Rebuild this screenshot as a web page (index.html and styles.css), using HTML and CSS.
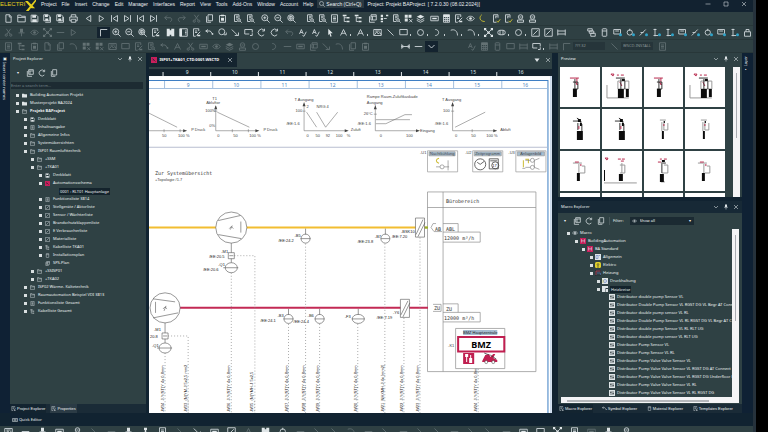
FILE: index.html
```html
<!DOCTYPE html>
<html lang="en">
<head>
  <meta charset="UTF-8" />
  <meta name="viewport" content="width=device-width, initial-scale=1.0" />
  <title>Projekt BAProject</title>
  <link rel="stylesheet" href="styles.css">
</head>
<body>

<!-- Icon set -->
<svg class="defs" aria-hidden="true">
  <symbol id="i-new" viewBox="0 0 12 12"><path d="M2.5 1h5l2 2.500v7.500h-7zM7 1v3h3"/></symbol>
  <symbol id="i-open" viewBox="0 0 12 12"><path d="M1 10.500v-9h4l1 1.500h5v7.500zM1 4.500h10"/></symbol>
  <symbol id="i-save" viewBox="0 0 12 12"><path d="M1.500 1.500h7l2 2v7h-9z"/><path class="f" d="M3 1.500h5v3.500h-5zM3 7h6v3.500h-6z"/></symbol>
  <symbol id="i-saveall" viewBox="0 0 12 12"><path d="M1 1h6l2 2v6h-8zM10 4v7h-7"/><path class="f" d="M2.500 1h4v3h-4zM3 6h4v3h-4z"/></symbol>
  <symbol id="i-print" viewBox="0 0 12 12"><path d="M3 4v-3h6v3M3 9h-2v-5h10v5h-2M3 7h6v4h-6z"/></symbol>
  <symbol id="i-prev" viewBox="0 0 12 12"><path d="M9 2v8l-6-4z"/></symbol>
  <symbol id="i-next" viewBox="0 0 12 12"><path d="M3 2v8l6-4z"/></symbol>
  <symbol id="i-first" viewBox="0 0 12 12"><path d="M2 1.500v9M10 2v8l-6-4z"/></symbol>
  <symbol id="i-last" viewBox="0 0 12 12"><path d="M10 1.500v9M2 2v8l6-4z"/></symbol>
  <symbol id="i-undo" viewBox="0 0 12 12"><path d="M4 2l-3 3 3 3M1 5h7c3 0 3 5 0 5"/></symbol>
  <symbol id="i-redo" viewBox="0 0 12 12"><path d="M8 2l3 3-3 3M11 5h-7c-3 0-3 5 0 5"/></symbol>
  <symbol id="i-cut" viewBox="0 0 12 12"><path d="M3 1l5 7M9 1l-5 7"/><circle cx="3" cy="9.500" r="1.500"/><circle cx="9" cy="9.500" r="1.500"/></symbol>
  <symbol id="i-copy" viewBox="0 0 12 12"><path d="M4 1h6v8h-6zM2 3v8h6"/></symbol>
  <symbol id="i-paste" viewBox="0 0 12 12"><path d="M2 2h8v9h-8z"/><path class="f" d="M4 1h4v2h-4zM4 5h4v4h-4z"/></symbol>
  <symbol id="i-sheet" viewBox="0 0 12 12"><path d="M8 5v-4h-6v9h4M4 3h3M4 5h3M4 7h1"/><circle cx="8" cy="8" r="1.800"/><path d="M9.500 9.500l2 2"/></symbol>
  <symbol id="i-zin" viewBox="0 0 12 12"><circle cx="5" cy="5" r="4"/><path d="M8 8l3.500 3.500M3 5h4M5 3v4"/></symbol>
  <symbol id="i-zout" viewBox="0 0 12 12"><circle cx="5" cy="5" r="4"/><path d="M8 8l3.500 3.500M3 5h4"/></symbol>
  <symbol id="i-zfit" viewBox="0 0 12 12"><circle cx="5" cy="5" r="4"/><path d="M8 8l3.500 3.500M3 3.500h4v3h-4zM5 2v6"/></symbol>
  <symbol id="i-list" viewBox="0 0 12 12"><path d="M2 1h8v10h-8zM4 4h4M4 6h4M4 8h4"/></symbol>
  <symbol id="i-tree" viewBox="0 0 12 12"><path d="M3 3v7h3M3 5h3"/><path class="f" d="M1 1h5v2h-5zM6 4h4v2h-4zM6 9h4v2h-4z"/></symbol>
  <symbol id="i-wins" viewBox="0 0 12 12"><path d="M4 1h7v7h-7zM2 3v8h7M4 3h7M6 3v5"/></symbol>
  <symbol id="i-struct" viewBox="0 0 12 12"><path class="f" d="M1 1h3v3h-3zM1 5h3v3h-3zM1 9h3v2h-3zM8 1h3v2h-3z"/><path d="M5 6h4"/></symbol>
  <symbol id="i-table" viewBox="0 0 12 12"><path class="f" d="M1 1h4v4h-4zM6 1h4v4h-4zM1 6h4v4h-4z"/><path d="M7 7l4 4M7 11l4-4"/></symbol>
  <symbol id="i-stack" viewBox="0 0 12 12"><path class="f" d="M6 1l5 2.500-5 2.500-5-2.500z"/><path d="M1 6l5 2.500 5-2.500M1 8.500l5 2.500 5-2.500"/></symbol>
  <symbol id="i-card" viewBox="0 0 12 12"><path d="M1 3h10v6h-10z"/><path class="f" d="M3 5h6v2h-6z"/></symbol>
  <symbol id="i-calc" viewBox="0 0 12 12"><path d="M2 1h8v10h-8zM2 6h8M2 8.500h8M5 4v7M7.500 4v7"/><path class="f" d="M2 1h8v3h-8z"/></symbol>
  <symbol id="i-edit" viewBox="0 0 12 12"><path d="M9 4v-3h-7v10h3M4 4h3M4 6h3M6 10l5-5"/><path class="f" d="M7 9h4v2h-4z"/></symbol>
  <symbol id="i-eye" viewBox="0 0 12 12"><path d="M1 6c2-4 8-4 10 0c-2 4-8 4-10 0z"/><circle class="f" cx="6" cy="6" r="1.800"/></symbol>
  <symbol id="i-moon" viewBox="0 0 12 12"><path class="y" d="M5 1c-4 3-3 9 4 9"/></symbol>
  <symbol id="i-sheety" viewBox="0 0 12 12"><path d="M8 5v-4h-6v10h4M4 3h3M4 5h2"/><path class="y" d="M6 9l2 2 3-4"/></symbol>
  <symbol id="i-badge" viewBox="0 0 12 12"><circle cx="6" cy="4" r="3"/><path d="M2 11h8v-3h-8zM4.500 4h3"/></symbol>
  <symbol id="i-corner" viewBox="0 0 12 12"><path d="M2 11v-9h9"/></symbol>
  <symbol id="i-win1" viewBox="0 0 12 12"><path class="f" fill-rule="evenodd" d="M1 1h10v10h-10zM5 1v2h2v-2zM5 9v2h2v-2z"/></symbol>
  <symbol id="i-win2" viewBox="0 0 12 12"><path d="M1 1h10v10h-10zM8 4h2M8 6h2M8 8h2"/><path class="f" d="M1 1h3v10h-3z"/></symbol>
  <symbol id="i-arc" viewBox="0 0 12 12"><path d="M1 3c5-2 9 1 9 7"/></symbol>
  <symbol id="i-conn" viewBox="0 0 12 12"><path d="M1 4h6l3 4M4 2l-3 2 3 2"/><path class="f" d="M9 7h2v2h-2z"/></symbol>
  <symbol id="i-circle" viewBox="0 0 12 12"><circle cx="6" cy="6" r="4"/></symbol>
  <symbol id="i-circlea" viewBox="0 0 12 12"><circle cx="5" cy="5" r="4"/><path d="M8 9h3v-3"/></symbol>
  <symbol id="i-line" viewBox="0 0 12 12"><path d="M2 2l8 8"/></symbol>
  <symbol id="i-linea" viewBox="0 0 12 12"><path d="M1 2l8 8M5 10h5v-4"/></symbol>
  <symbol id="i-recta" viewBox="0 0 12 12"><path d="M11 6v-4h-10v6h6M8 10h3v-3"/></symbol>
  <symbol id="i-rect" viewBox="0 0 12 12"><path d="M1 2h10v7h-10z"/></symbol>
  <symbol id="i-rot" viewBox="0 0 12 12"><path d="M9.500 3a4.500 4.500 0 1 0 0 6M10 1v3h-3"/></symbol>
  <symbol id="i-text" viewBox="0 0 12 12"><path d="M2 8l2.500-6 2.500 6M3 6h3M6 10l2 1 3-6"/></symbol>
  <symbol id="i-ptr" viewBox="0 0 12 12"><path class="f" d="M3 1l6 6h-3l1.500 4-1.500.500-1.500-4-1.500 2z"/></symbol>
  <symbol id="i-a" viewBox="0 0 12 12"><path d="M2 10l4-8 4 8M4 7h4"/></symbol>
  <symbol id="i-img" viewBox="0 0 12 12"><path d="M1 2h10v8h-10zM2 9l3-4 2 3 2-2 2 3M3 4h6"/></symbol>
  <symbol id="i-curve" viewBox="0 0 12 12"><path d="M3 2c6 0 6 8 0 8"/></symbol>
  <symbol id="i-node" viewBox="0 0 12 12"><path d="M2 2l8 8M10 2l-8 8"/><path class="f" d="M0 0h3v3h-3zM9 0h3v3h-3zM0 9h3v3h-3zM9 9h3v3h-3zM4.500 4.500h3v3h-3z"/></symbol>
  <symbol id="i-pipe" viewBox="0 0 12 12"><rect x="1" y="3" width="10" height="6" rx="3"/><path d="M4 3v6M8 3v6"/></symbol>
  <symbol id="i-chart" viewBox="0 0 12 12"><path d="M1 1h10v10h-10zM3 9l6-6"/></symbol>
  <symbol id="i-dim" viewBox="0 0 12 12"><path d="M1 2v8M11 2v8M1 4h10M1 8h10"/></symbol>
  <symbol id="i-phone" viewBox="0 0 12 12"><rect x="3" y="1" width="6" height="10" rx="1"/><path d="M3 4h6"/></symbol>
  <symbol id="i-lay" viewBox="0 0 12 12"><path d="M1 1h6v3h-6zM3 4h6v3h-6zM5 7h6v4h-6z"/></symbol>
  <symbol id="i-cardb" viewBox="0 0 12 12"><path d="M1 2h9v6h-9zM3 4h5"/><circle class="b" cx="10" cy="9" r="2"/></symbol>
  <symbol id="i-rotb" viewBox="0 0 12 12"><circle cx="5" cy="6" r="3.500"/><path d="M5 1v3"/><circle class="b" cx="10" cy="9" r="2"/></symbol>
  <symbol id="i-lineb" viewBox="0 0 12 12"><path d="M1 10l8-8M2 6h4"/><circle class="b" cx="10" cy="9" r="2"/></symbol>
  <symbol id="i-colb" viewBox="0 0 12 12"><path d="M4 1v10M2 2h4M2 10h6"/><circle class="b" cx="10" cy="9" r="2"/></symbol>
  <symbol id="i-lock" viewBox="0 0 12 12"><path d="M2 5h8v6h-8zM4 5v-3h4v3"/></symbol>
  <symbol id="i-dimh" viewBox="0 0 12 12"><path d="M1 6h10M1 3v6M11 3v6M3 4l-2 2 2 2M9 4l2 2-2 2"/></symbol>
  <symbol id="i-dash" viewBox="0 0 12 12"><path d="M1 6h10"/></symbol>
  <symbol id="i-chev" viewBox="0 0 12 12"><path d="M2 4l4 4 4-4"/></symbol>
  <symbol id="i-x" viewBox="0 0 12 12"><path d="M2 2l8 8M10 2l-8 8"/></symbol>
  <symbol id="i-pin" viewBox="0 0 12 12"><path class="f" d="M4 1h4v5h-4z"/><path d="M2 6.500h8M6 6v5"/></symbol>
  <symbol id="i-max" viewBox="0 0 12 12"><path d="M2 2h8v8h-8z"/></symbol>
  <symbol id="i-tri" viewBox="0 0 12 12"><path class="f" d="M1 3h10l-5 7z"/></symbol>
  <symbol id="i-search" viewBox="0 0 12 12"><circle cx="5" cy="5" r="4"/><path d="M8 8l3.500 3.500"/></symbol>
  <symbol id="i-fold" viewBox="0 0 12 12"><path class="f" d="M0 10.500v-9h5l1 1.500h6v7.500z"/></symbol>
  <symbol id="i-red" viewBox="0 0 12 12"><path class="r" d="M0 0h12v12h-12z"/><path class="k" d="M3 3l6 6M3 6h3"/></symbol>
  <symbol id="i-m" viewBox="0 0 12 12"><path class="r" d="M0 0h12v12h-12z"/><path d="M3 9v-6l3 4 3-4v6"/></symbol>
  <symbol id="i-blue" viewBox="0 0 12 12"><path class="f" d="M0 0h12v12h-12z"/><path class="bl" d="M2 3h4v6h-4zM7 3h3"/></symbol>
  <symbol id="i-el" viewBox="0 0 12 12"><rect class="yf" width="12" height="12" rx="3"/><path class="k" d="M6 2v5l-2-2M6 7l2-2M4 10h4"/></symbol>
  <symbol id="i-heat" viewBox="0 0 12 12"><path class="k" d="M0 0h12v12h-12z"/><path class="rs" d="M2 2h9M2 2v8"/><path class="bl" d="M4 6h7v4"/></symbol>
  <symbol id="i-druck" viewBox="0 0 12 12"><path class="f" d="M0 0h12v12h-12z"/><circle class="bl" cx="6" cy="6" r="3"/><path class="y" d="M2 10v-7"/></symbol>
  <symbol id="i-kreis" viewBox="0 0 12 12"><path class="f" d="M0 0h12v4h-5v8h-7zM8 6h4v6h-4z"/></symbol>
  <symbol id="i-mac" viewBox="0 0 12 12"><path class="f" d="M0 0h12v12h-12z"/><path class="k" d="M4 2v8M8 2v8M2 5h3M7 7h3"/></symbol>
  <symbol id="i-stick" viewBox="0 0 12 12"><path class="f" d="M4 1h4v3h-4zM5 4h2v7h-2z"/></symbol>

  <!-- Preview thumbnails -->
  <symbol id="t-a" viewBox="0 0 40 40"><path class="t-red" d="M10 11h9M15 15l3 3M17 11v7"/><path class="t-ln" d="M15 12v10M13 15h5v7h-5"/><path class="t-f" d="M13 22h4v8h-4z"/></symbol>
  <symbol id="t-b" viewBox="0 0 40 40"><path class="t-red" d="M9 7h3l-1 2zM15 8h2M19 8h3M18 15l2 4"/><path class="t-lt" d="M5 18v13h22M16 14h11v8h-11z"/><path class="t-ln" d="M14 11h9M19 12v10M23 14v8"/><path class="t-f" d="M16 22h6v9h-6zM24 22h3v8h-3zM20 12h3v2h-3z"/></symbol>
  <symbol id="t-c" viewBox="0 0 40 40"><path class="t-ln" d="M13 12h8v3M17 9l3 2M22 15v7M18 14v7"/><path class="t-f" d="M17 22h6v9h-6zM18 10h3v3h-3zM20 14h2v3h-2z"/><path class="t-red" d="M19 17v3"/></symbol>
  <symbol id="t-d" viewBox="0 0 40 40"><path class="t-lt" d="M16 11h6M20 12v9h4v-7M18 13v9"/><path class="t-f" d="M18 22h2v8h-2zM20 12h1v2h-1z"/><path class="t-red" d="M20 15v2"/></symbol>
  <symbol id="t-e" viewBox="0 0 40 40"><path class="t-lt" d="M13 12h9M19 13v9M22 15h3v7h-5"/><path class="t-f" d="M17 22h3v8h-3z"/><path class="t-red" d="M15 11h4M21 13v2"/></symbol>
  <symbol id="t-f" viewBox="0 0 40 40"><path class="t-red" d="M3 7h3l-1 2zM16 8h3M20 8h3M19 10h3"/><path class="t-lt" d="M2 32h33M18 14h5v8h-5M20 12v10"/><path class="t-f" d="M17 23h4v7h-4zM2 19h1v11h-1z"/></symbol>
  <symbol id="t-g" viewBox="0 0 40 40"><path class="t-red" d="M14 11h3M16 8h2M20 8h3"/><path class="t-lt" d="M17 31h4M20 14h4v8h-6"/><path class="t-ln" d="M17 12h5M18 13v9"/><path class="t-f" d="M16 23h4v8h-4zM18 9h3v2h-3z"/></symbol>
</svg>

<div class="app">
  <header class="titlebar">
    <div class="logo"><span>ELECTRI</span><svg viewBox="0 0 12 12"><path d="M0 1h3l8 8h-4zM11 0h2l-9 12h-3z"/></svg></div>
    <nav class="menu" id="menu"></nav>
    <button class="search"><svg class="ic"><use href="#i-search"/></svg>Search (Ctrl+Q)</button>
    <h1>Project: Projekt BAProject &nbsp;[ 7.2.0.30 (08.02.2024)]</h1>
    <div class="win">
      <button aria-label="Minimize"><svg class="ic"><use href="#i-dash"/></svg></button>
      <button aria-label="Maximize"><svg class="ic"><use href="#i-max"/></svg></button>
      <button aria-label="Close"><svg class="ic"><use href="#i-x"/></svg></button>
    </div>
  </header>

  <div class="toolbars">
    <div class="bar" id="bar1" role="toolbar" aria-label="File"></div>
    <div class="bar" id="bar2" role="toolbar" aria-label="Draw"></div>
    <div class="bar low" id="bar3" role="toolbar" aria-label="Symbols"></div>
  </div>

  <main class="work">
    <aside class="rail left"><button>▣ Insert center names</button></aside>

    <section class="panel explorer">
      <div class="head"><h2>Project Explorer</h2>
        <button aria-label="Menu"><svg class="ic"><use href="#i-chev"/></svg></button>
        <button aria-label="Pin"><svg class="ic"><use href="#i-pin"/></svg></button>
        <button aria-label="Close"><svg class="ic"><use href="#i-x"/></svg></button>
      </div>
      <div class="tools">
        <button class="dd" aria-label="More">▾</button>
        <button aria-label="Find"><svg class="ic big"><use href="#i-wins"/></svg></button>
        <button aria-label="Refresh"><svg class="ic big"><use href="#i-rot"/></svg></button>
        <button aria-label="Copy"><svg class="ic big"><use href="#i-copy"/></svg></button>
      </div>
      <input class="find" type="text" placeholder="Enter a search term..." aria-label="Search term">
      <ul class="tree" id="projectTree"></ul>
      <div class="tabs">
        <button class="on"><svg class="ic"><use href="#i-edit"/></svg>Project Explorer</button>
        <button class="lit"><svg class="ic"><use href="#i-edit"/></svg>Properties</button>
      </div>
    </section>

    <section class="doc">
      <div class="doctabs">
        <button class="doctab"><svg class="ic"><use href="#i-red"/></svg>ISP01+TKA01_CTD.0001.WSCTD<svg class="ic"><use href="#i-x"/></svg></button>
        <div class="docbtns">
          <button aria-label="Documents"><svg class="ic"><use href="#i-tri"/></svg></button>
          <button aria-label="Close document"><svg class="ic"><use href="#i-x"/></svg></button>
        </div>
      </div>
      <svg class="sheet" viewBox="148 69 402 344" preserveAspectRatio="xMinYMin slice">
        <rect class="ruler" x="148" y="69" width="402" height="7"/>
        <rect class="paper" x="148" y="76" width="402" height="344"/>
        <g id="ruler"></g>
        <path class="frame" d="M148 80.500h397.500v340"/>
        <path class="frame thin" d="M148 88.500h397M548.500 76v344"/>
        <path class="sep" d="M148 147h397"/>

        <!-- Characteristic curves -->
        <g class="ln">
          <path d="M148 113l28 14M148 130.500h34M163 129v3M179 129v3"/>
          <path d="M214.500 106v24.500h40M216 112l32 15M213 111h3M231 129v3M247 129v3"/>
          <path d="M302.500 104v26.500h41M305 112l10 15M315 112l9 15 12-15M301 111h3"/>
          <path d="M373.500 105v25.500h42M374 123.500h10l19-9h7M374 119.500h34M372 114h3"/>
          <path d="M450.500 104v26.500h42M453 127l30-15M449 111h3M470 129v3"/>
        </g>
        <g class="arrows">
          <path d="M182 129l4 1.500-4 1.500zM254 129l4 1.500-4 1.500zM343 129l4 1.500-4 1.500zM414 129l4 1.500-4 1.500zM491 129l4 1.500-4 1.500z"/>
          <path d="M213 109l1.500-4 1.500 4zM301 106l1.500-4 1.500 4zM372 109l1.500-4 1.500 4zM449 106l1.500-4 1.500 4z"/>
        </g>
        <g class="tx">
          <text x="148" y="105">r</text>
          <text x="161" y="137">50</text><text x="177" y="137">100 %</text><text x="190" y="131">P Druck</text>
          <text x="211" y="100">T1</text><text x="205" y="104">Abluftor</text><text x="204" y="112">100%</text><text x="208" y="127">0%</text>
          <text x="216" y="137">0</text><text x="232" y="137">50</text><text x="248" y="137">100 %</text><text x="262" y="131">P Druck</text>
          <text x="293" y="101">T Ausgang</text><text x="305" y="108">2</text><text x="315" y="108">NRG 4</text><text x="294" y="112">100</text><text x="285" y="125">/EE:1.6</text>
          <text x="305" y="137">0</text><text x="314" y="137">50</text><text x="324" y="137">92</text><text x="334" y="137">100</text><text x="345" y="137">%</text><text x="349" y="131">Zuluft</text>
          <text x="365" y="98">Rampe Raum-Zuluftkaskade</text><text x="365" y="104">Ausgang</text><text x="362" y="115">26°C</text><text x="356" y="125">/EE:1.6</text>
          <text x="378" y="137">0</text><text x="404" y="137">100</text><text x="418" y="132">Eingang</text>
          <text x="440" y="101">T Ausgang</text><text x="441" y="112">100</text><text x="433" y="125">/EE:1.6</text>
          <text x="453" y="137">0</text><text x="469" y="137">50</text><text x="484" y="137">100 %</text><text x="498" y="131">Abluft</text>
        </g>
        <text class="mono" x="154" y="175">Zur Systemübersicht</text>
        <text class="tx" x="154" y="181">+Topologie /1.7</text>

        <!-- Function chips -->
        <g class="chip">
          <path d="M425.500 150.500h30v21h-30zM470.500 150.500h30v21h-30zM513.500 150.500h30v21h-30z"/>
          <path class="hd" d="M427 151.500h26v4h-26zM472 151.500h27v4h-27zM515 151.500h27v4h-27z"/>
        </g>
        <g class="tx">
          <text x="428" y="155">Nachtkühlung</text><text x="473" y="155">Zeitprogramm</text><text x="518" y="155">Anlagenbild</text>
          <text x="418" y="154">-U1</text><text x="463" y="154">-U2</text><text x="506" y="154">-U3</text>
        </g>
        <path class="gold" d="M437 158c-4 1-3 4 0 5M521 160v7M523 159h3v4"/>
        <path class="ln" d="M434 166.500h4M442 166.500h5M446 160v10"/><circle class="ln" cx="440" cy="166.500" r="2"/>
        <circle class="dk" cx="478" cy="164" r="5.500"/><path class="dk" d="M475 162l3 2 4-3M487 158.500h9v10h-9z"/>
        <circle class="dk" cx="493" cy="165" r="3.500"/><path class="dk" d="M488 160.500h7"/><text class="tx b" x="490" y="167">17</text>
        <circle class="ln" cx="530" cy="160" r="2"/><circle class="ln" cx="530" cy="167" r="2"/><path class="ln" d="M523 160h5M532 160l5-2M532 160v7M532 167l5 2M523 167h5M520 168h3"/>

        <!-- Zone -->
        <path class="box" d="M425.500 191.500h108v179h-108zM425.500 207h108M441 191.500v179M441 223h15v8.500M441 231.500h37v10h-37M441 303h15v8.500M441 311.500h37v9.500h-37"/>
        <text class="mono" x="444" y="203">Bürobereich</text>
        <g class="mono"><text x="444" y="230">ABL</text><text x="442" y="239">12000 m³/h</text><text x="444" y="310">ZU</text><text x="442" y="319">12000 m³/h</text><text x="433" y="230">AB</text><text x="432" y="309">ZU</text></g>
        <path class="box" d="M434 223h-3l-2 4 3 4h8M431 303.500h8v7h-8"/>

        <!-- Air ducts -->
        <path class="duct ab" d="M148 227h66.500M245.500 227h180"/>
        <path class="duct green" d="M423 227h3"/>
        <path class="duct zu" d="M179 307h247"/>

        <!-- Cables -->
        <g id="cables"></g>
        <path class="cable" d="M233 255h20.500v158M167 335h20v78"/>

        <!-- Fans -->
        <g class="ln fan">
          <circle cx="230" cy="227" r="15.500"/><path d="M217 220l22-5M217 234l23 4M239.500 221v11M228 228l2-2 2 2M229 229l2-4M230 242.500v9.500"/>
          <path d="M227 252h6v6h-6zM228 255h4M230 258v4"/><ellipse cx="230" cy="267" rx="6" ry="5"/><path d="M222 267h15"/>
          <circle cx="164" cy="307" r="15"/><path d="M152 298l22 3M152 317l25-5M154.500 301v11M162 308l2-2 2 2M163 310l2-5M164 322v10"/>
          <path d="M161 332h6v6h-6zM162 335h4M164 338v4"/><ellipse cx="164" cy="347" rx="6" ry="5"/><path d="M156 347h15"/>
        </g>

        <!-- Sensors and flaps -->
        <g class="ln fan">
          <path d="M304 228v6M287 308v6M318 308v6M383.500 228v6M356.500 308v6"/>
          <circle cx="304" cy="238" r="4.500"/><circle cx="287" cy="318" r="4.500"/><circle cx="318" cy="318" r="4.500"/><circle cx="383.500" cy="238" r="4.500"/><ellipse cx="356.500" cy="318" rx="6" ry="4.500"/>
          <path d="M299 238h10M282 318h10M313 318h10M379 238h9M350 318h13"/>
          <path class="flap" d="M413.500 217.500h9v19h-9zM398.500 298.500h9v18h-9z"/>
          <path d="M414 234l7-15M416 236l7-14M399 314l7-14M401 316l7-14"/>
        </g>
        <g class="tx b">
          <text x="220" y="252">-M1</text><text x="208" y="257">/EE:20.5</text><text x="217" y="265">-Q1</text><text x="202" y="270">/EE:20.6</text>
          <text x="153" y="330">-M1</text><text x="149" y="337">20.8</text><text x="151" y="346">-Q1</text>
          <text x="293" y="236">-B5</text><text x="277" y="241">/EE:24.2</text><text x="276" y="316">-B3</text><text x="259" y="321">/EE:24.1</text>
          <text x="306" y="316">-B6</text><text x="292" y="322">/EE:24.4</text><text x="343" y="317">-F3</text>
          <text x="373" y="237">-B7</text><text x="356" y="242">/EE:23.8</text><text x="399" y="232">-BSK10</text><text x="390" y="237">/EE:7.20</text>
          <text x="391" y="313">-Y6</text><text x="375" y="318">/EE:7.19</text>
        </g>

        <!-- Fire alarm panel -->
        <path class="box wh" d="M453.500 327.500h49v40h-49z"/>
        <path class="hdr" d="M461 329h34v5h-34z"/><text class="tx b" x="478" y="333" text-anchor="middle">BMZ Hauptzentrale</text>
        <path class="bmz" d="M456 336h46v14.500h-46z"/><text class="big" x="479" y="347" text-anchor="middle">BMZ</text>
        <text class="tx" x="446" y="346">-K1</text>
        <path class="redf" fill-rule="evenodd" d="M461 352h11v11h-11zM463 353v3h1v5h1v-5h1v-3zM467 357v5h3v-5h-1v-3h-1v3z"/>
        <path class="redf" d="M480 360l3-6 4-1 1 3 3-3h2l-2 4 4 2v2h-15z"/><circle class="wheel" cx="484" cy="361" r="1.500"/><circle class="wheel" cx="491" cy="361" r="1.500"/><path class="dk" d="M482 352l5 2M488 354l6 4"/>
      </svg>
    </section>

    <div class="side">
      <section class="panel preview">
        <div class="head"><h2>Preview</h2>
          <button aria-label="Menu"><svg class="ic"><use href="#i-chev"/></svg></button>
          <button aria-label="Pin"><svg class="ic"><use href="#i-pin"/></svg></button>
          <button aria-label="Close"><svg class="ic"><use href="#i-x"/></svg></button>
        </div>
        <div class="scroller">
          <div class="thumbs" id="thumbs"></div>
          <div class="vbar"><i></i></div>
        </div>
      </section>

      <section class="panel macro">
        <div class="head dark"><h2>Macro Explorer</h2>
          <button aria-label="Menu"><svg class="ic"><use href="#i-chev"/></svg></button>
          <button aria-label="Pin"><svg class="ic"><use href="#i-pin"/></svg></button>
          <button aria-label="Close"><svg class="ic"><use href="#i-x"/></svg></button>
        </div>
        <div class="tools">
          <button class="dd" aria-label="More">▾</button>
          <button aria-label="Find"><svg class="ic big"><use href="#i-wins"/></svg></button>
          <button aria-label="Refresh"><svg class="ic big"><use href="#i-rot"/></svg></button>
          <button aria-label="Copy"><svg class="ic big"><use href="#i-copy"/></svg></button>
          <label for="filter">Filter:</label>
          <span class="select"><svg class="ic"><use href="#i-eye"/></svg><select id="filter"><option>Show all</option></select>▾</span>
        </div>
        <div class="scroller">
          <ul class="tree" id="macroTree"></ul>
          <div class="vbar"><i></i></div>
        </div>
        <div class="hbar"><i></i></div>
        <div class="tabs">
          <button class="on"><svg class="ic"><use href="#i-edit"/></svg>Macro Explorer</button>
          <button><svg class="ic"><use href="#i-conn"/></svg>Symbol Explorer</button>
          <button><svg class="ic"><use href="#i-phone"/></svg>Material Explorer</button>
          <button><svg class="ic"><use href="#i-edit"/></svg>Templates Explorer</button>
        </div>
      </section>
    </div>

    <aside class="rail right"><button>▪ Layer</button></aside>
  </main>

  <footer class="quick"><button><svg class="ic"><use href="#i-card"/></svg>Quick Editor</button></footer>
  <div class="bar bottom" id="bar4" role="toolbar" aria-label="Symbols 2"></div>
</div>

<script>
  const use = id => `<svg class="ic"><use href="#i-${id}"/></svg>`;

  document.getElementById('menu').innerHTML =
    ['Project','File','Insert','Change','Edit','Manager','Interfaces','Report','View','Tools','Add-Ons','Window','Account','Help']
      .map(m => `<button>${m}</button>`).join('');

  // "name" icon, "name." icon with drop arrow, "-name" disabled, "!name" pressed, "|" small gap, "||" large gap
  function fillBar(id, spec) {
    document.getElementById(id).insertAdjacentHTML('beforeend', spec.split(' ').map(s => {
      if (s[0] === '|') return `<span class="gap g${s.length}"></span>`;
      if (s[0] === '[') return `<select aria-label="Option"><option>${s.slice(1)}</option></select>`;
      const name = s.replace(/[-!.]/g, '');
      const cls = [s[0] === '-' ? 'off' : '', s[0] === '!' ? 'down' : '', s.endsWith('.') ? 'drop' : ''].join(' ').trim();
      return `<button class="${cls}" aria-label="${name}">${use(name)}</button>`;
    }).join(''));
  }
  fillBar('bar1', 'new open save saveall saveall print | prev next first last first last | -undo -redo | -cut copy paste | sheet sheet | zin zout zfit || sheet sheet list tree tree | wins struct sheet table stack | card calc edit eye moon | sheety sheety badge badge');
  fillBar('bar2', '-cut -pin -eye -node -dash -next ||| !corner zin zout zfit edit | win1 win2 edit conn circlea linea recta rot rot | -undo text text | ptr a. a. img line rect. circle. curve. arc. arc. node pipe. circle. chart chart dim ||| lay phone cardb rotb lineb colb colb cardb lineb rotb cardb colb lock');
  fillBar('bar3', '-list -tree -paste -new -copy -arc -table -table -img -rect -edit -sheet -conn -a -cut -card -eye -stack -badge -circle || -curve -dash -card -wins -linea -arc -copy -paste |||| dimh dash !chev |||| -text -calc -phone -rect -dim recta. -dim -corner [???.32 -line [WSCD-INSTALL -list');
  fillBar('bar4', 'img dash pin card badge -line -dash pin stick list -line linea card chart -a win1 rotb -dash -line -line -arc -dash -line -dash -line -line -dash -line -line -dash card rect node list -card pin badge');

  // [level, icon, label, flags]: b bold, s selected, n no expander
  const project = [
    [0,'fold','Building Automation Projekt'],[0,'fold','Musterprojekt BA2024'],[0,'open','Projekt BAProject','b'],
    [1,'save','Deckblatt'],[1,'list','Inhaltsangabe'],[1,'open','Allgemeine Infos'],[1,'open','Systemübersichten'],[1,'open','ISP01 Raumlufttechnik'],
    [2,'open','+SSM'],[2,'open','+TKA01'],[3,'save','Deckblatt'],[3,'red','Automationsschema'],[4,'','0001 : RLT01 Hauptanlage','sn'],
    [3,'list','Funktionsliste 3814'],[3,'chart','Stellgeräte / Aktorliste'],[3,'chart','Sensor / Wächterliste'],[3,'chart','Brandschutzklappenliste'],
    [3,'chart','E Verbraucherliste'],[3,'chart','Materialliste'],[3,'tree','Kabelliste TKA01'],[3,'phone','Installationsplan'],[3,'wins','SPS-Plan','n'],
    [2,'open','+SSISP01'],[2,'open','+TKA02'],[1,'open','ISP02 Wärme- Kältetechnik'],[1,'open','Raumautomation Beispiel VDI 3813'],[1,'list','Funktionsliste Gesamt'],[1,'tree','Kabelliste Gesamt']
  ];
  const macros = [
    [0,'eye','Macro'],[1,'m','BuildingAutomation'],[2,'m','BA Standard'],[3,'blue','Allgemein'],[3,'el','Elektro'],[3,'heat','Heizung'],[4,'druck','Druckhaltung'],[4,'kreis','Heizkreise','s'],
    ...['double pump Sensor VL','Double Pump Sensor VL RGST DG VL Begr AT Conn','double pump sensor VL RL','Double Pump Sensor VL RL RGST DG VL Begr AT C','double pump Sensor VL RL RLT UG','double pump sensor VL RLT UG','Pump Sensor VL','Pump Sensor VL RL','Pump Valve Valve Sensor VL','Pump Valve Valve Sensor VL RGST DG AT Connect','Pump Valve Valve Sensor VL RGST DG Underfloor h','Pump Valve Valve Sensor VL RL','Pump Valve Valve Sensor VL RL RGST DG']
      .map(t => [5,'mac','Distributor ' + t,'n'])
  ];
  const drawTree = (id, rows) => document.getElementById(id).innerHTML = rows.map(([lv, ic, t, f = '']) =>
    `<li class="lv${lv}${f.includes('n') ? ' leaf' : ''}">${f.includes('n') ? '' : '<b class="exp"></b>'}${ic ? use(ic) : ''}<span class="${f.includes('b') ? 'bold' : ''}${f.includes('s') ? 'sel' : ''}">${t}</span></li>`).join('');
  drawTree('projectTree', project);
  drawTree('macroTree', macros);

  document.getElementById('thumbs').innerHTML = [...'ababccddefge    '].map(t =>
    `<div>${t === ' ' ? '' : `<svg viewBox="0 0 40 40"><use href="#t-${t}"/></svg>`}</div>`).join('');

  // Sheet columns 9 to 16
  let r = '';
  for (let n = 9; n <= 16; n++) {
    const x = 186 + (n - 9) * 47.5, c = 187 + (n - 9) * 48;
    r += `<text class="rt" x="${x}" y="74">${n}</text><path class="tick" d="M${x - 24} 72v4"/>`;
    r += `<text class="ct" x="${c}" y="87">${n}</text><path class="frame thin" d="M${c - 23.500} 80v8"/>`;
  }
  document.getElementById('ruler').innerHTML = r;

  // x, top of the dashed line, label
  document.getElementById('cables').innerHTML = [
    [164,352,'-W34  J-Y(ST)Y 4x 0,8mm'],[187,400,'-W33  (N)YM-J 5x2,5 mm2'],[230,272,'-W36  J-Y(ST)Y 4x 0,8mm'],[253,400,'-W35  (N)YMH-J 5x2,5'],
    [287,323,'-W37  J-Y(ST)Y 4x 0,8mm'],[304,243,'-W38  J-Y(ST)Y 4x 0,8mm'],[318,323,'-W39  J-Y(ST)Y 4x 0,8mm'],[356,323,'-W20  J-Y(ST)Y 4x 0,8mm'],
    [383,243,'-W21  NHXMH-J 4x [mm2]'],[402,317,'-W22  J-Y(ST)Y 4x 0,8mm'],[418,237,'-W23  J-Y(ST)Y 4x 0,8mm'],[476,368,'-W24  J-Y(ST)Y 4x 0,8mm']
  ].map(([x, y, t]) => `<path class="cable" d="M${x} ${y}V413"/><text class="tx b" transform="translate(${x - 1} 411) rotate(-90)">${t}</text>`).join('');
</script>
</body>
</html>
```
FILE: styles.css
```css
* {
  margin: 0;
  padding: 0;
  box-sizing: border-box;
}

body {
  height: 100vh;
  background: #000;
  color: #edf1f2;
  font-family: "Noto Sans", "Liberation Sans", sans-serif;
  font-size: 4px;
  line-height: 8px;
  overflow: hidden;
  padding-right: 12px;
}

button, input, select {
  font: inherit;
  color: inherit;
  background: none;
  border: 0;
}

h1, h2 {
  font-size: inherit;
  font-weight: normal;
}

.defs {
  position: absolute;
  width: 0;
  height: 0;
}

.ic {
  width: 6px;
  height: 6px;
  flex: none;
  display: block;
}

.ic.big {
  width: 8px;
  height: 8px;
}

symbol {
  fill: none;
  stroke: #cdd5d8;
  stroke-width: 1.2;
}

symbol .f { fill: #dfe5e7; stroke: none; }
symbol .y { stroke: #c9c032; }
symbol .yf { fill: #e0cf2c; stroke: none; }
symbol .b { fill: #2fa3c9; stroke: none; }
symbol .r { fill: #c81f5c; stroke: none; }
symbol .rs { stroke: #e03455; }
symbol .bl { stroke: #5a78c0; }
symbol .k { stroke: #1b2529; }
symbol .t-red { stroke: #b8294e; stroke-width: 1; }
symbol .t-ln { stroke: #333; stroke-width: 1; }
symbol .t-lt { stroke: #999; stroke-width: 1; }
symbol .t-f { fill: #0c0c0c; stroke: none; }

.app {
  height: 100%;
  display: flex;
  flex-direction: column;
  background: #112331;
  border-right: 3px solid #26323c;
}

/* Title bar */
.titlebar {
  height: 12px;
  flex: none;
  display: flex;
  align-items: flex-start;
  font-family: "Liberation Sans", sans-serif;
  font-size: 5px;
  background: #122230;
}

.logo {
  width: 38px;
  display: flex;
  color: #e5cf1d;
  font-size: 6px;
}

.logo svg {
  width: 11px;
  height: 11px;
  fill: #e5cf1d;
}

.menu {
  display: flex;
  gap: 5px;
  padding: 0 4px 0 3px;
}

.search {
  display: flex;
  align-items: center;
  gap: 1px;
  padding: 0 2px;
  background: #2a3942;
}

.titlebar h1 {
  margin-left: 4px;
}

.win {
  margin-left: auto;
  display: flex;
  gap: 12px;
  padding: 1px 6px 0 0;
}

/* Toolbars */
.toolbars {
  flex: none;
  background: #2f4043;
}

.bar {
  height: 14px;
  display: flex;
  align-items: center;
  padding-left: 2px;
  border-bottom: 1px solid #283739;
  overflow: hidden;
}

.bar.low {
  height: 13px;
}

.bar button {
  width: 13px;
  height: 11px;
  flex: none;
  display: flex;
  align-items: center;
  justify-content: center;
}

#bar1 .g2 ~ button {
  width: 12px;
}

.bar .ic {
  width: 9px;
  height: 9px;
}

.bar .off {
  opacity: 0.3;
}

.bar .down {
  background: #14232f;
}

.bar .drop {
  width: 17px;
  justify-content: flex-start;
  padding-left: 2px;
}

.bar .drop::after {
  content: "";
  width: 1px;
  height: 2px;
  margin: 5px 0 0 2px;
  background: #c3cccf;
}

.bar select {
  width: 32px;
  height: 8px;
  flex: none;
  color: #8a9699;
  background: #26353a;
  appearance: none;
  padding-left: 2px;
  margin-right: 3px;
}

.gap { flex: none; }
.g1 { width: 2px; }
.g2 { width: 6px; }
.g3 { width: 17px; }
.g4 { width: 27px; }

/* Work area */
.work {
  flex: 1;
  min-height: 0;
  display: flex;
  padding-bottom: 2px;
}

.rail {
  flex: none;
  width: 10px;
  background: #0f2134;
}

.rail button {
  writing-mode: vertical-rl;
  padding-top: 3px;
  width: 8px;
}

.rail.right {
  width: 11px;
}

.rail.right button {
  transform: rotate(180deg);
  padding: 0 0 3px;
}

.panel {
  display: flex;
  flex-direction: column;
  min-height: 0;
  background: #2f4144;
}

.explorer {
  flex: 0 0 18%;
  margin-right: 3px;
}

.head {
  flex: none;
  height: 12px;
  display: flex;
  align-items: center;
  gap: 4px;
  padding: 0 3px;
}

.head h2 {
  flex: 1;
}

.head.dark {
  background: #172936;
}

.tools {
  flex: none;
  display: flex;
  align-items: center;
  gap: 4px;
  height: 16px;
  padding-left: 5px;
}

.tools .dd {
  width: 6px;
  margin-right: 1px;
}

.find {
  flex: none;
  height: 7px;
  margin: 1px 3px 2px 1px;
  background: #1d2b32;
}

.find::placeholder {
  color: #75848a;
}

.tree {
  flex: 1;
  min-width: 0;
  min-height: 0;
  overflow: hidden;
  list-style: none;
}

.tree li {
  display: flex;
  align-items: center;
  gap: 3px;
  height: 8px;
  white-space: nowrap;
}

.exp {
  width: 3px;
  height: 3px;
  flex: none;
  background: #d9dfe1;
}

.tree .ic {
  width: 5px;
  height: 5px;
}

.lv0 { padding-left: 6px; }
.lv1 { padding-left: 14px; }
.lv2 { padding-left: 21px; }
.lv3 { padding-left: 29px; }
.lv4 { padding-left: 36px; }
.lv3.leaf { padding-left: 35px; }
.lv4.leaf { padding-left: 49px; }
.lv5.leaf { padding-left: 48px; }

#macroTree .ic {
  width: 6px;
  height: 6px;
}

#macroTree li {
  gap: 2px;
}

.bold {
  font-weight: bold;
}

.tree .sel {
  background: #14232c;
  height: 7px;
  line-height: 7px;
  padding: 0 1px;
}

.tabs {
  flex: none;
  display: flex;
  height: 9px;
  background: #1a2b37;
  font-family: "Liberation Sans", sans-serif;
}

.tabs button {
  display: flex;
  align-items: center;
  gap: 1px;
  padding: 0 1px;
}

.tabs .ic {
  width: 5px;
  height: 5px;
}

.explorer .tabs {
  gap: 4px;
}

.tabs .on {
  background: #132430;
}

.tabs .lit {
  background: #2b3b45;
}

/* Document */
.doc {
  flex: 1;
  min-width: 0;
  display: flex;
  flex-direction: column;
  background: #2f4144;
  margin-right: 6px;
}

.doctabs {
  flex: none;
  height: 16px;
  display: flex;
  align-items: flex-start;
  justify-content: space-between;
  background: #2f4144;
}

.doctab {
  display: flex;
  align-items: center;
  gap: 3px;
  height: 14px;
  padding: 0 4px 0 2px;
  background: #14242f;
  color: #fff;
  font-weight: bold;
}

.doctab .ic:last-child {
  margin-left: 5px;
}

.docbtns {
  display: flex;
  gap: 5px;
  padding: 4px 1px 0 0;
}

.sheet {
  flex: 1;
  min-height: 0;
  width: 100%;
  display: block;
}

.sheet path, .sheet circle, .sheet ellipse { fill: none; }
.sheet .ruler { fill: #15242f; }
.sheet .paper { fill: #fff; }
.sheet .frame { stroke: #3f7fc4; }
.sheet .thin { stroke: #a3bfde; }
.sheet .sep { stroke: #b9bed0; }
.sheet .tick { stroke: #e3e8ea; }
.sheet .rt { fill: #dfe5e8; font-size: 5px; text-anchor: middle; }
.sheet .ct { fill: #4f83bd; font-size: 5px; text-anchor: middle; }
.sheet .ln { stroke: #777; stroke-width: 0.6; fill: none; }
.sheet .fan { stroke: #555; }
.sheet .dk { stroke: #444; stroke-width: 0.8; }
.sheet .gold { stroke: #cdbb35; }
.sheet .flap { fill: #fff; }
.sheet .arrows path { fill: #444; }
.sheet .box { stroke: #8c8c8c; stroke-width: 0.7; }
.sheet .wh { fill: #fff; }
.sheet .chip path { stroke: #999; stroke-width: 0.7; }
.sheet .chip .hd { fill: #a4bdd0; }
.sheet .hdr { fill: #a4bdd0; }
.sheet .duct { stroke-width: 2; }
.sheet .ab { stroke: #f2bd31; }
.sheet .zu { stroke: #c32a55; }
.sheet .green { stroke: #8fae2f; }
.sheet .cable { stroke: #888; stroke-width: 0.7; stroke-dasharray: 1 2; }
.sheet .bmz { stroke: #c01f50; stroke-width: 2; }
.sheet .redf { fill: #c01f50; }
.sheet .wheel { fill: #fff; stroke: #333; stroke-width: 0.5; }
.sheet text { white-space: pre; }
.sheet .tx { font-family: "Liberation Sans", sans-serif; font-size: 4px; fill: #444; }
.sheet .b { fill: #222; }
.sheet .mono { font-family: "DejaVu Sans Mono", monospace; font-size: 5px; fill: #333; }
.sheet .big { font-size: 9px; font-weight: bold; fill: #000; }

/* Right side */
.side {
  flex: 0 0 184px;
  min-width: 0;
  display: flex;
  flex-direction: column;
  gap: 4px;
}

.preview {
  flex: 0 0 40%;
}

.macro {
  flex: 1;
}

.scroller {
  flex: 1;
  min-height: 0;
  display: flex;
  gap: 8px;
  padding: 0 3px;
}

.preview .scroller {
  padding: 2px 2px 0;
}

.macro .scroller {
  gap: 0;
}

.thumbs {
  flex: 1;
  display: grid;
  grid-template-columns: repeat(4, 1fr);
  grid-auto-rows: 40px;
  gap: 2px;
  overflow: hidden;
}

.thumbs div {
  background: #fff;
}

.thumbs svg {
  width: 100%;
  height: 100%;
  display: block;
}

.vbar {
  flex: none;
  width: 7px;
  background: #f4f4f6;
  padding: 6px 3px;
}

.vbar i {
  display: block;
  height: 55%;
  background: #a9acb2;
}

.hbar {
  flex: none;
  height: 6px;
  margin: 0 3px 1px;
  padding: 3px 30px 1px 6px;
  background: #f4f4f6;
}

.hbar i {
  display: block;
  height: 2px;
  background: #b5b7bb;
}

.macro .tabs {
  justify-content: space-between;
  padding-right: 8px;
}

.macro .tools {
  padding-left: 4px;
}

.tools label {
  padding: 0 2px 0 3px;
  border-left: 1px solid #47575a;
}

.select {
  display: flex;
  align-items: center;
  gap: 3px;
  flex: 0 0 36%;
  height: 8px;
  padding: 0 3px 0 2px;
  background: #1b2a32;
}

.select .ic {
  width: 5px;
}

.select select {
  flex: 1;
  appearance: none;
}

/* Bottom */
.quick {
  flex: none;
  height: 11px;
  padding: 1px 0 0 12px;
}

.quick button {
  display: flex;
  align-items: center;
  gap: 1px;
}

.bar.bottom {
  flex: none;
  height: 6px;
  align-items: flex-start;
  justify-content: space-between;
  padding: 0 120px 0 2px;
  background: #2f4043;
  border: 0;
}
```
